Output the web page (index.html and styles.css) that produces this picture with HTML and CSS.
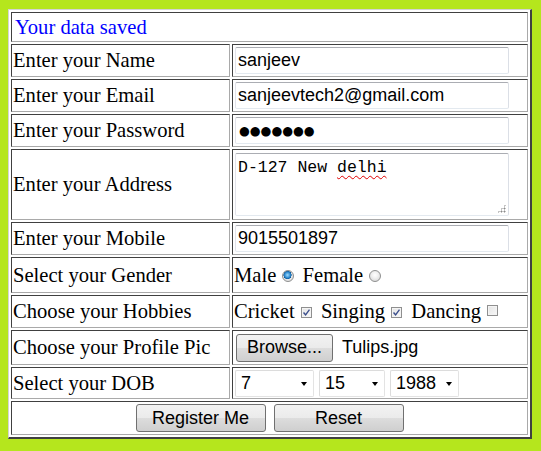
FILE: index.html
```html
<!DOCTYPE html>
<html>
<head>
<meta charset="utf-8">
<title>Register</title>
<link rel="stylesheet" href="styles.css">
</head>
<body>
<form class="reg">
<table class="grid">
  <tr class="r-msg"><td colspan="2" class="msg">Your data saved</td></tr>
  <tr class="r-std"><td class="label">Enter your Name</td><td class="field"><input class="text" type="text" value="sanjeev"></td></tr>
  <tr class="r-std"><td class="label">Enter your Email</td><td class="field"><input class="text" type="text" value="sanjeevtech2@gmail.com"></td></tr>
  <tr class="r-std"><td class="label">Enter your Password</td><td class="field"><input class="text pass" type="text" value="●●●●●●●"></td></tr>
  <tr class="r-addr"><td class="label">Enter your Address</td><td class="field"><div class="area">D-127 New <span class="typo">delhi</span><span class="grip"></span></div></td></tr>
  <tr class="r-std"><td class="label">Enter your Mobile</td><td class="field"><input class="text" type="text" value="9015501897"></td></tr>
  <tr class="r-gender"><td class="label">Select your Gender</td><td class="field opts">Male <span class="radio on"></span> Female <span class="radio"></span></td></tr>
  <tr class="r-std"><td class="label">Choose your Hobbies</td><td class="field opts">Cricket <span class="check"><svg viewBox="0 0 7 7" width="7" height="7"><path d="M0.5 3.5 L2.6 5.8 L6.5 0.6" fill="none" stroke="#3b4e8c" stroke-width="1.4"/></svg></span> Singing <span class="check"><svg viewBox="0 0 7 7" width="7" height="7"><path d="M0.5 3.5 L2.6 5.8 L6.5 0.6" fill="none" stroke="#3b4e8c" stroke-width="1.4"/></svg></span> Dancing <span class="check"></span></td></tr>
  <tr class="r-pic"><td class="label">Choose your Profile Pic</td><td class="field"><div class="file"><button type="button" class="btn browse">Browse...</button><span class="fname">Tulips.jpg</span></div></td></tr>
  <tr class="r-dob"><td class="label">Select your DOB</td><td class="field"><div class="dob"><span class="sel w1">7</span><span class="sel w2">15</span><span class="sel w3">1988</span></div></td></tr>
  <tr class="r-btn"><td colspan="2" class="actions"><div class="btns"><button type="button" class="btn big">Register Me</button><button type="button" class="btn big">Reset</button></div></td></tr>
</table>
</form>
</body>
</html>
```
FILE: styles.css
```css
html, body {
  margin: 0;
  padding: 0;
}
body {
  background: #b5e61d;
  padding: 9px 0 0 8px;
  height: 451px;
  box-sizing: border-box;
  font-family: "Liberation Serif", "Times New Roman", serif;
  font-size: 20.6px;
  color: #000;
}
.reg {
  margin: 0;
}
.grid {
  border-collapse: separate;
  border-spacing: 2px;
  background: #fff;
  width: 524px;
  border-style: solid;
  border-width: 1px 2px 2px 1px;
  border-color: #d4d4d4 #404040 #404040 #d4d4d4;
}
.grid td {
  border: 1px solid;
  border-color: #404040 #a9a9a9 #a9a9a9 #404040;
  padding: 1px;
  vertical-align: middle;
}
.label {
  width: 215px;
  line-height: 29px;
  white-space: nowrap;
}
.msg {
  color: #0000ff;
  line-height: 26px;
  padding-left: 3px !important;
}
.r-addr .label { line-height: 67px; }
.r-gender .label { line-height: 32px; }
.r-pic .label { line-height: 31px; }
.r-dob .label { line-height: 28px; }
.actions { height: 30px; text-align: center; }

.field {
  line-height: 29px;
}
.text {
  display: block;
  box-sizing: border-box;
  width: 274px;
  height: 27px;
  margin: 0 0 0 1px;
  padding: 0 2px;
  border: 1px solid;
  border-color: #abadb3 #dbdfe6 #e3e9ef #e2e3ea;
  border-radius: 2px;
  font-family: "Liberation Sans", Arial, sans-serif;
  font-size: 18px;
  color: #000;
  background: #fff;
  outline: none;
}
.pass {
  font-family: "DejaVu Sans", sans-serif;
  font-size: 12.4px;
  padding-left: 3px;
}
.area {
  position: relative;
  box-sizing: border-box;
  width: 274px;
  height: 63px;
  margin: 1px 0 1px 1px;
  padding: 4px 2px 0;
  border: 1px solid;
  border-color: #abadb3 #dbdfe6 #e3e9ef #e2e3ea;
  border-radius: 2px;
  font-family: "Liberation Mono", "Courier New", monospace;
  font-size: 16.5px;
  line-height: 20px;
  white-space: pre;
}
.typo {
  text-decoration: underline wavy #e00000;
  text-decoration-thickness: 1px;
  text-underline-offset: 3px;
}
.grip {
  position: absolute;
  right: 2px;
  bottom: 2px;
  width: 9px;
  height: 9px;
  background:
    radial-gradient(circle, #8a8a8a 0.9px, transparent 1.1px) 0 0 / 3px 3px;
  clip-path: polygon(100% 0, 100% 100%, 0 100%);
}
.opts {
  padding-left: 1px;
  white-space: nowrap;
}
.r-gender .field { line-height: 32px; }
.radio {
  display: inline-block;
  box-sizing: border-box;
  width: 12px;
  height: 12px;
  margin: 0 3px 0 1px;
  border-radius: 50%;
  border: 1px solid #8e8f8f;
  background: radial-gradient(circle at 50% 40%, #ffffff 0, #f0f0f0 40%, #cfcfcf 100%);
  vertical-align: 0;
}
.radio.on {
  background:
    radial-gradient(circle at 45% 40%, #9fdcff 0, #2f8bd0 35%, #0d5b9e 48%, transparent 52%),
    radial-gradient(circle, #f4f4f4 0, #d8d8d8 100%);
}
.check {
  display: inline-flex;
  align-items: center;
  justify-content: center;
  box-sizing: border-box;
  width: 11px;
  height: 11px;
  margin: 0 4px 0 1px;
  border: 1px solid #8f8f8f;
  background: linear-gradient(135deg, #e4e4e4 0, #f8f8f8 100%);
  box-shadow: inset 0 0 0 1px #f4f4f4;
  vertical-align: 2px;
}
.check svg { display: block; }

.btn {
  box-sizing: border-box;
  border: 1px solid #707070;
  border-radius: 3px;
  background: linear-gradient(#f2f2f2 0, #ebebeb 50%, #dddddd 50%, #cfcfcf 100%);
  font-family: "Liberation Sans", Arial, sans-serif;
  font-size: 18px;
  color: #000;
  padding: 0;
  margin: 0;
}
.file {
  display: flex;
  align-items: center;
  gap: 9px;
  height: 31px;
  padding-left: 2px;
}
.browse {
  width: 97px;
  height: 28px;
}
.fname {
  font-family: "Liberation Sans", Arial, sans-serif;
  font-size: 18px;
}
.dob {
  display: flex;
  gap: 5px;
  padding-left: 1px;
  height: 28px;
  align-items: center;
}
.sel {
  position: relative;
  box-sizing: border-box;
  height: 27px;
  line-height: 25px;
  padding-left: 5px;
  border: 1px solid;
  border-color: #dcdcdc #e3e3e3 #e3e3e3 #dcdcdc;
  border-radius: 2px;
  font-family: "Liberation Sans", Arial, sans-serif;
  font-size: 18px;
}
.sel::after {
  content: "";
  position: absolute;
  right: 6px;
  top: 11px;
  border-left: 3.5px solid transparent;
  border-right: 3.5px solid transparent;
  border-top: 4px solid #000;
}
.w1 { width: 79px; }
.w2 { width: 66px; }
.w3 { width: 69px; }
.btns {
  display: flex;
  justify-content: center;
  gap: 8px;
}
.big {
  width: 130px;
  height: 28px;
}
```
